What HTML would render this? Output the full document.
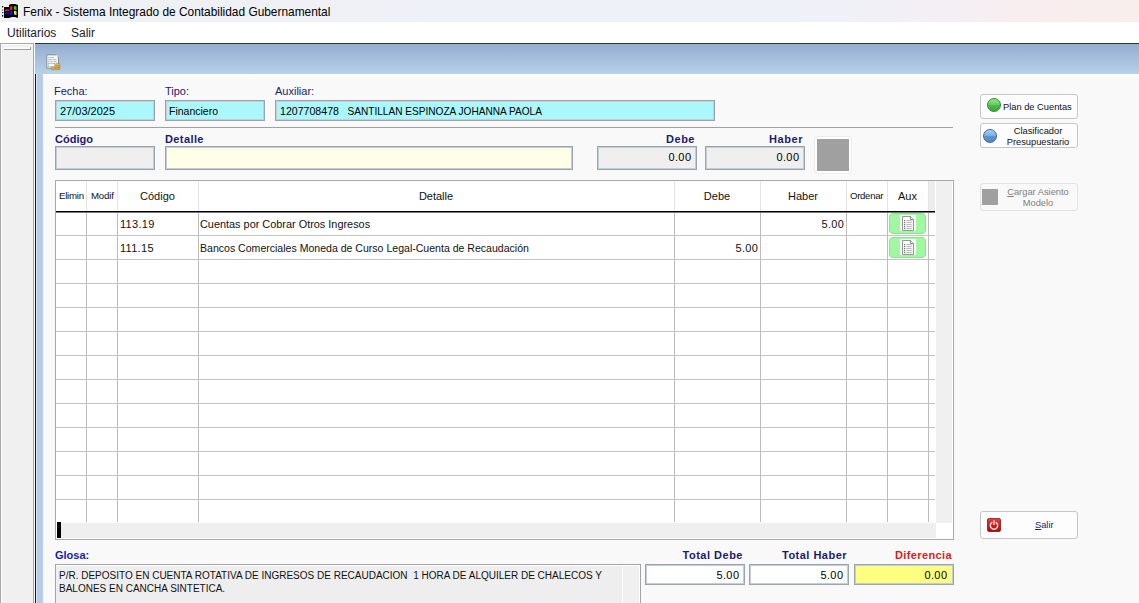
<!DOCTYPE html><html><head><meta charset="utf-8"><style>
*{margin:0;padding:0;box-sizing:border-box}
html,body{width:1139px;height:603px;overflow:hidden;background:#f9f9f9;font-family:"Liberation Sans",sans-serif;font-size:11px;color:#000}
div,span{position:absolute;white-space:nowrap}
.lbl{color:#1c2266;font-size:11px}
.blbl{color:#1a1a73;font-size:11px;font-weight:bold}
.inp{border:1px solid #98a4b0;box-shadow:inset 0 0 0 1px #c4ccd6;overflow:hidden;font-size:11px}
.inp span{top:4px}
.cy{background:#aaf8fc}
.gr{background:#efefef}
.yl{background:#fffee6}
.btn{border:1px solid #c6c6c6;border-radius:3px;background:#fdfdfd;font-size:9.5px;color:#111;text-align:center}
.hl{height:1px;background:#c0c0c0}
.vl{width:1px;background:#c0c0c0}
.gh{font-size:11px;color:#111}
.cell{font-size:11px;color:#111}
</style></head><body>
<div style="left:0;top:0;width:1139px;height:22px;background:linear-gradient(90deg,#eff0f2 0%,#eef1f8 45%,#eff1f9 70%,#f3eff5 82%,#f9edee 92%,#f8eeec 100%)"></div>
<svg style="position:absolute;left:0;top:0" width="20" height="20" viewBox="0 0 20 20">
<path d="M9 5 L11 4 L15 4 L18 5 L18 18 L15 17 L12 17 L9 18 Z" fill="#000"/>
<path d="M10 6.5 L12.5 6 L12.5 9.5 L10 10Z" fill="#e02424"/>
<path d="M14 6 L16.5 6.5 L16.5 10 L14 9.5Z" fill="#2ed82e"/>
<path d="M10 11 L12.5 10.8 L12.5 14.5 L10 15Z" fill="#1414e0"/>
<path d="M14 10.8 L16.5 11 L16.5 15 L14 14.5Z" fill="#f2e624"/>
<path d="M4 7 L9 7 L9 18 L4 18 Z" fill="#000"/>
<rect x="5" y="9.5" width="4" height="1.6" fill="#e02424"/>
<rect x="5" y="12.5" width="4" height="1.6" fill="#1414e0"/>
<rect x="2" y="6" width="1.2" height="1.4" fill="#000"/><rect x="2" y="9.5" width="1.2" height="1.2" fill="#c04040"/>
<rect x="2" y="12" width="1.2" height="1.2" fill="#2020c0"/><rect x="2" y="15" width="1.2" height="1.6" fill="#000"/>
</svg>
<span style="left:23px;top:5px;font-size:11.9px;color:#000">Fenix - Sistema Integrado de Contabilidad Gubernamental</span>
<div style="left:0;top:22px;width:1139px;height:21px;background:#fff"></div>
<span style="left:7px;top:26px;font-size:12px;color:#1a1a2a">Utilitarios</span>
<span style="left:71px;top:26px;font-size:12px;color:#1a1a2a">Salir</span>
<div style="left:0;top:43px;width:34px;height:560px;background:#f0f0f0;border:1px solid #a8a8a8;border-bottom:none;box-shadow:inset 1px 1px 0 #fff"></div>
<div style="left:4px;top:47px;width:27px;height:2px;background:#fbfbfb"></div>
<div style="left:4px;top:49px;width:27px;height:1px;background:#a0a0a0"></div>
<div style="left:30px;top:47px;width:1px;height:3px;background:#a0a0a0"></div>
<div style="left:35px;top:43px;width:1104px;height:1px;background:#2a3442"></div>
<div style="left:35px;top:44px;width:1104px;height:30px;background:linear-gradient(#93adcd,#b8d1ea)"></div>
<div style="left:43px;top:74px;width:1096px;height:5px;background:linear-gradient(#fdfefc,#f9f9f9)"></div>
<div style="left:35px;top:74px;width:8px;height:529px;background:#b6cde7"></div>
<div style="left:36px;top:74px;width:1px;height:529px;background:#dce8f5"></div>
<div style="left:35px;top:74px;width:1px;height:529px;background:#151515"></div>
<svg style="position:absolute;left:45px;top:53px" width="17" height="18" viewBox="0 0 17 18">
<path d="M1.8 1.8 L10.5 1.8 L13.5 4.8 L13.5 15.2 L1.8 15.2 Z" fill="#f6f8f6" stroke="#78848a" stroke-width="0.9"/>
<circle cx="11.8" cy="3.2" r="0.9" fill="#fff"/>
<rect x="3.2" y="4.2" width="1.2" height="0.9" fill="#8a9498"/><rect x="5.3" y="4.2" width="3.5" height="0.9" fill="#a8b0b0"/>
<rect x="3.2" y="6.3" width="3.6" height="0.9" fill="#a8b0b0"/><rect x="7.6" y="6.3" width="3.8" height="0.9" fill="#a8b0b0"/>
<rect x="3.2" y="8.3" width="1.2" height="0.9" fill="#8a9498"/><rect x="5.3" y="8.3" width="2.5" height="0.9" fill="#a8b0b0"/><rect x="8.6" y="8.3" width="3" height="0.9" fill="#a8b0b0"/>
<rect x="3.2" y="10.5" width="6.5" height="3" fill="#fbfbf6" stroke="#a8b0b0" stroke-width="0.7"/>
<rect x="6.2" y="14.2" width="4.3" height="2.4" rx="1" fill="#dcb048" stroke="#a07818" stroke-width="0.5"/>
<rect x="10.3" y="10.4" width="4.7" height="2.2" rx="1" fill="#e6c25a" stroke="#a07818" stroke-width="0.5"/>
<rect x="10.3" y="12.4" width="4.7" height="2.2" rx="1" fill="#dfb54c" stroke="#a07818" stroke-width="0.5"/>
<rect x="10.3" y="14.4" width="4.7" height="2.2" rx="1" fill="#d8aa40" stroke="#a07818" stroke-width="0.5"/>
</svg>
<span class="lbl" style="left:54px;top:85px">Fecha:</span>
<span class="lbl" style="left:165px;top:85px">Tipo:</span>
<span class="lbl" style="left:275px;top:85px">Auxiliar:</span>
<div class="inp cy" style="left:55px;top:100px;width:100px;height:21px"><span style="left:4px">27/03/2025</span></div>
<div class="inp cy" style="left:165px;top:100px;width:100px;height:21px"><span style="left:3px;font-size:10.5px">Financiero</span></div>
<div class="inp cy" style="left:275px;top:100px;width:440px;height:21px"><span style="left:4px;font-size:10.6px">1207708478</span><span style="left:71.5px;font-size:10.1px;top:5px">SANTILLAN ESPINOZA JOHANNA PAOLA</span></div>
<div style="left:55px;top:127px;width:898px;height:1px;background:#a0a0a0"></div>
<span class="blbl" style="left:55px;top:133px">Código</span>
<span class="blbl" style="left:165px;top:133px;letter-spacing:0.4px">Detalle</span>
<span class="blbl" style="left:595px;top:133px;width:100px;text-align:right;letter-spacing:0.5px">Debe</span>
<span class="blbl" style="left:703px;top:133px;width:100px;text-align:right;letter-spacing:0.55px">Haber</span>
<div class="inp gr" style="left:55px;top:146px;width:100px;height:24px"></div>
<div class="inp yl" style="left:165px;top:146px;width:408px;height:24px"></div>
<div class="inp gr" style="left:597px;top:146px;width:100px;height:24px"><span style="right:4.6px;top:4px;letter-spacing:0.4px">0.00</span></div>
<div class="inp gr" style="left:705px;top:146px;width:100px;height:24px"><span style="right:4.6px;top:4px;letter-spacing:0.4px">0.00</span></div>
<div style="left:814px;top:136px;width:38px;height:38px;background:#fff;border:1px solid #ececec;border-radius:4px"></div>
<div style="left:817px;top:139px;width:32px;height:32px;background:#a0a0a0"></div>
<div style="left:55px;top:180px;width:899px;height:360px;background:#fff;border:1px solid #a8a8a8"></div>
<div class="vl" style="left:86px;top:181px;height:30px;background:#e4e4e4"></div>
<div class="vl" style="left:117px;top:181px;height:30px;background:#e4e4e4"></div>
<div class="vl" style="left:198px;top:181px;height:30px;background:#e4e4e4"></div>
<div class="vl" style="left:674px;top:181px;height:30px;background:#e4e4e4"></div>
<div class="vl" style="left:760px;top:181px;height:30px;background:#e4e4e4"></div>
<div class="vl" style="left:846px;top:181px;height:30px;background:#e4e4e4"></div>
<div class="vl" style="left:887px;top:181px;height:30px;background:#e4e4e4"></div>
<div class="vl" style="left:928px;top:181px;height:30px;background:#e4e4e4"></div>
<div style="left:929px;top:181px;width:6px;height:30px;background:#ececec"></div>
<div style="left:936px;top:181px;width:16px;height:342px;background:#f0f0f0"></div>
<div style="left:56px;top:211px;width:879px;height:1px;background:#000"></div>
<div style="left:56px;top:212px;width:879px;height:1px;background:#777"></div>
<div class="vl" style="left:86px;top:213px;height:309px;background:#bcbcbc"></div>
<div class="vl" style="left:117px;top:213px;height:309px;background:#bcbcbc"></div>
<div class="vl" style="left:198px;top:213px;height:309px;background:#bcbcbc"></div>
<div class="vl" style="left:674px;top:213px;height:309px;background:#bcbcbc"></div>
<div class="vl" style="left:760px;top:213px;height:309px;background:#bcbcbc"></div>
<div class="vl" style="left:846px;top:213px;height:309px;background:#bcbcbc"></div>
<div class="vl" style="left:887px;top:213px;height:309px;background:#bcbcbc"></div>
<div class="vl" style="left:928px;top:213px;height:309px;background:#bcbcbc"></div>
<div class="hl" style="left:56px;top:235px;width:879px;background:#c4c4c4"></div>
<div class="hl" style="left:56px;top:259px;width:879px;background:#c4c4c4"></div>
<div class="hl" style="left:56px;top:283px;width:879px;background:#c4c4c4"></div>
<div class="hl" style="left:56px;top:307px;width:879px;background:#c4c4c4"></div>
<div class="hl" style="left:56px;top:331px;width:879px;background:#c4c4c4"></div>
<div class="hl" style="left:56px;top:355px;width:879px;background:#c4c4c4"></div>
<div class="hl" style="left:56px;top:379px;width:879px;background:#c4c4c4"></div>
<div class="hl" style="left:56px;top:403px;width:879px;background:#c4c4c4"></div>
<div class="hl" style="left:56px;top:427px;width:879px;background:#c4c4c4"></div>
<div class="hl" style="left:56px;top:451px;width:879px;background:#c4c4c4"></div>
<div class="hl" style="left:56px;top:475px;width:879px;background:#c4c4c4"></div>
<div class="hl" style="left:56px;top:499px;width:879px;background:#c4c4c4"></div>
<div style="left:56px;top:522px;width:880px;height:17px;background:#fff"></div>
<div style="left:61px;top:523px;width:875px;height:15px;background:#efefef"></div>
<div style="left:57px;top:522px;width:4px;height:16px;background:#000"></div>
<span class="gh" style="left:59px;top:190px;font-size:9.7px;letter-spacing:-0.25px">Elimin</span>
<span class="gh" style="left:91px;top:190px;font-size:9.7px;letter-spacing:-0.2px">Modif</span>
<span class="gh" style="left:117px;top:190px;width:81px;text-align:center">Código</span>
<span class="gh" style="left:198px;top:190px;width:476px;text-align:center">Detalle</span>
<span class="gh" style="left:674px;top:190px;width:86px;text-align:center">Debe</span>
<span class="gh" style="left:760px;top:190px;width:86px;text-align:center">Haber</span>
<span class="gh" style="left:850px;top:190px;font-size:9.6px;letter-spacing:-0.3px">Ordenar</span>
<span class="gh" style="left:887px;top:190px;width:41px;text-align:center">Aux</span>
<span class="cell" style="left:120px;top:218px;letter-spacing:0.3px">113.19</span>
<span class="cell" style="left:200px;top:218px;font-size:10.9px">Cuentas por Cobrar Otros Ingresos</span>
<span class="cell" style="left:760px;top:218px;width:84.4px;text-align:right;letter-spacing:0.4px">5.00</span>
<span class="cell" style="left:120px;top:242px;letter-spacing:0.3px">111.15</span>
<span class="cell" style="left:200px;top:242px;font-size:10.55px">Bancos Comerciales Moneda de Curso Legal-Cuenta de Recaudación</span>
<span class="cell" style="left:674px;top:242px;width:84.4px;text-align:right;letter-spacing:0.4px">5.00</span>
<div style="left:889px;top:213px;width:37px;height:21px;background:#a2f7a2;border:1px solid #8fe08f;border-radius:4px"><svg style="position:absolute;left:10px;top:0px" width="17" height="19" viewBox="0 0 17 19"><rect x="0" y="1" width="16" height="16" fill="#fdfffd"/>
<path d="M2.5 2.5 L10.5 2.5 L13.5 5.5 L13.5 16.5 L2.5 16.5 Z" fill="#fbfbfb" stroke="#8a8a8a" stroke-width="0.9"/>
<path d="M10.5 2.5 L10.5 5.5 L13.5 5.5" fill="#e8e8e8" stroke="#777" stroke-width="0.8"/>
<rect x="4" y="6" width="1.2" height="1.2" fill="#6a7a6a"/><rect x="6.3" y="6.2" width="5.5" height="0.9" fill="#b0b0b0"/>
<rect x="4" y="8" width="1.2" height="1.2" fill="#6a7a6a"/><rect x="6.3" y="8.2" width="5.5" height="0.9" fill="#b0b0b0"/>
<rect x="4" y="10" width="1.2" height="1.2" fill="#6a7a6a"/><rect x="6.3" y="10.2" width="5.5" height="0.9" fill="#b0b0b0"/>
<rect x="4" y="12" width="1.2" height="1.2" fill="#6a7a6a"/><rect x="6.3" y="12.2" width="5.5" height="0.9" fill="#b0b0b0"/>
<rect x="4" y="14" width="1.2" height="1.2" fill="#6a7a6a"/><rect x="6.3" y="14.2" width="5.5" height="0.9" fill="#b0b0b0"/>
</svg></div>
<div style="left:889px;top:237px;width:37px;height:21px;background:#a2f7a2;border:1px solid #8fe08f;border-radius:4px"><svg style="position:absolute;left:10px;top:0px" width="17" height="19" viewBox="0 0 17 19"><rect x="0" y="1" width="16" height="16" fill="#fdfffd"/>
<path d="M2.5 2.5 L10.5 2.5 L13.5 5.5 L13.5 16.5 L2.5 16.5 Z" fill="#fbfbfb" stroke="#8a8a8a" stroke-width="0.9"/>
<path d="M10.5 2.5 L10.5 5.5 L13.5 5.5" fill="#e8e8e8" stroke="#777" stroke-width="0.8"/>
<rect x="4" y="6" width="1.2" height="1.2" fill="#6a7a6a"/><rect x="6.3" y="6.2" width="5.5" height="0.9" fill="#b0b0b0"/>
<rect x="4" y="8" width="1.2" height="1.2" fill="#6a7a6a"/><rect x="6.3" y="8.2" width="5.5" height="0.9" fill="#b0b0b0"/>
<rect x="4" y="10" width="1.2" height="1.2" fill="#6a7a6a"/><rect x="6.3" y="10.2" width="5.5" height="0.9" fill="#b0b0b0"/>
<rect x="4" y="12" width="1.2" height="1.2" fill="#6a7a6a"/><rect x="6.3" y="12.2" width="5.5" height="0.9" fill="#b0b0b0"/>
<rect x="4" y="14" width="1.2" height="1.2" fill="#6a7a6a"/><rect x="6.3" y="14.2" width="5.5" height="0.9" fill="#b0b0b0"/>
</svg></div>
<div class="btn" style="left:980px;top:94px;width:98px;height:25px"></div>
<div style="left:987px;top:98px;width:14px;height:14px;border-radius:50%;background:linear-gradient(#8fe38f 0%,#62cf62 48%,#4aba4a 52%,#3caa3c 100%);border:1px solid #2f8a2f"></div>
<span style="left:1003px;top:102px;font-size:9.3px;color:#111">Plan de Cuentas</span>
<div class="btn" style="left:980px;top:123px;width:98px;height:25px"></div>
<div style="left:983px;top:129px;width:14px;height:14px;border-radius:50%;background:linear-gradient(#a4d0f4 0%,#78b0e6 48%,#5f94d0 52%,#5287c4 100%);border:1px solid #40689c"></div>
<span style="left:1000px;top:126px;width:76px;text-align:center;font-size:9.3px;color:#111;line-height:10.5px">Clasificador<br>Presupuestario</span>
<div class="btn" style="left:980px;top:183px;width:98px;height:28px;border-color:#e2e2e2;background:#f9f9f9"></div>
<div style="left:982px;top:189px;width:16px;height:16px;background:#a0a0a0"></div>
<span style="left:1000px;top:187px;width:76px;text-align:center;font-size:9.3px;color:#808080;line-height:10.8px"><u>C</u>argar Asiento<br>Modelo</span>
<div class="btn" style="left:980px;top:511px;width:98px;height:28px"></div>
<svg style="position:absolute;left:987px;top:518px" width="14" height="14" viewBox="0 0 14 14"><defs><linearGradient id="rg" x1="0" y1="0" x2="0" y2="1"><stop offset="0" stop-color="#d84848"/><stop offset="0.5" stop-color="#d02020"/><stop offset="1" stop-color="#a81010"/></linearGradient></defs>
<rect x="0.5" y="0.5" width="13" height="13" rx="1.5" fill="url(#rg)" stroke="#8c1414" stroke-width="0.8"/>
<path d="M5.3 4.3 A3.7 3.7 0 1 0 8.7 4.3" fill="none" stroke="#fbe8e8" stroke-width="1.4"/>
<rect x="6.35" y="2.2" width="1.3" height="4.8" fill="#f6d8d8"/></svg>
<span style="left:1035px;top:520px;font-size:9.3px;color:#1e2070"><u>S</u>alir</span>
<span class="blbl" style="left:55px;top:549px;color:#1a1ab8">Glosa:</span>
<span class="blbl" style="left:643px;top:549px;width:100px;text-align:right;letter-spacing:0.5px">Total Debe</span>
<span class="blbl" style="left:747px;top:549px;width:100px;text-align:right;letter-spacing:0.48px">Total Haber</span>
<span class="blbl" style="left:852px;top:549px;width:100px;text-align:right;color:#d81c1c;letter-spacing:0.38px">Diferencia</span>
<div style="left:55px;top:564px;width:586px;height:40px;background:#eeeeee;border:1px solid #a4a4a4;border-bottom:none;box-shadow:inset 0 1px 0 #fff,inset -1px 0 0 #fff"></div>
<div style="left:622px;top:566px;width:17px;height:37px;background:#f0f0f0;border-left:1px solid #fff"></div>
<span style="left:59px;top:569px;font-size:10px;color:#111;line-height:13px">P/R. DEPOSITO EN CUENTA ROTATIVA DE INGRESOS DE RECAUDACION&nbsp; 1 HORA DE ALQUILER DE CHALECOS Y<br>BALONES EN CANCHA SINTETICA.</span>
<div class="inp" style="left:645px;top:564px;width:100px;height:21px;background:#fff"><span style="right:4.6px;top:4px;letter-spacing:0.4px">5.00</span></div>
<div class="inp" style="left:749px;top:564px;width:100px;height:21px;background:#fff"><span style="right:4.6px;top:4px;letter-spacing:0.4px">5.00</span></div>
<div class="inp" style="left:854px;top:564px;width:100px;height:21px;background:#ffff80"><span style="right:5.6px;top:4px;letter-spacing:0.4px">0.00</span></div>
</body></html>
